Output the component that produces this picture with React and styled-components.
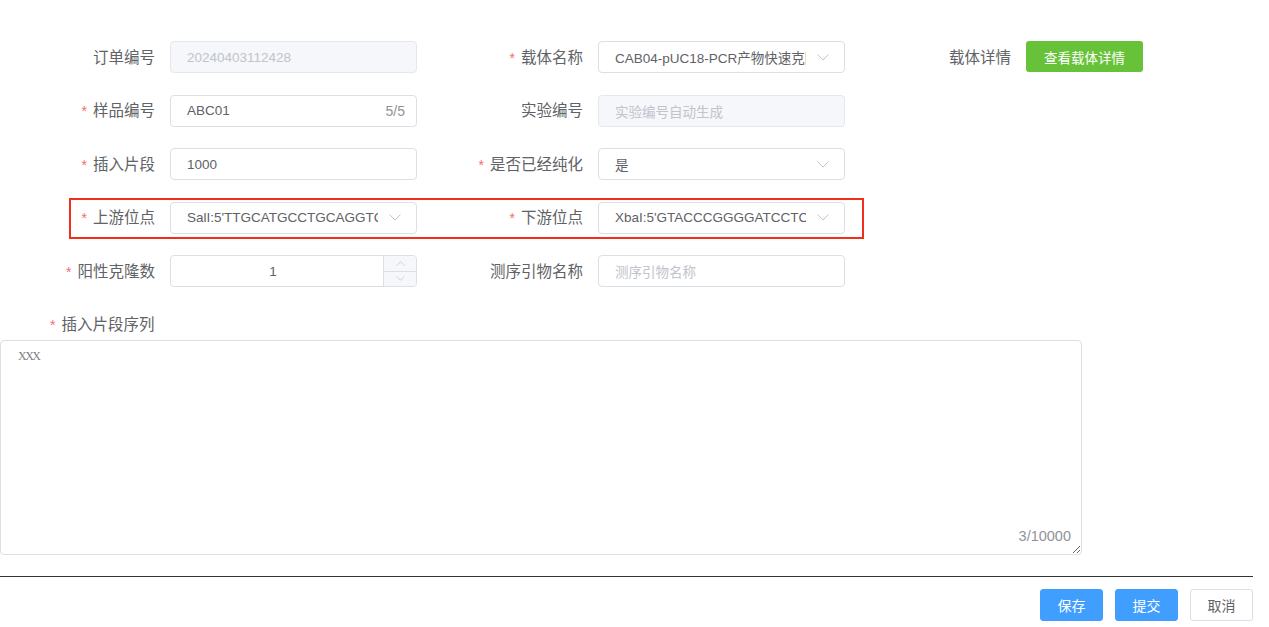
import React from 'react'
import styled, { createGlobalStyle } from 'styled-components'

const GlobalStyle = createGlobalStyle`
  body {
    margin: 0;
    background: #fff;
    font-family: "Liberation Sans", "Noto Sans CJK SC", sans-serif;
  }
`

function Chevron({ up }) {
  return (
    <svg width="12" height="7" viewBox="0 0 12 7" fill="none">
      <path
        d={up ? 'M0.5 6.5L6 1L11.5 6.5' : 'M0.5 0.5L6 6L11.5 0.5'}
        stroke="#c0c4cc"
        strokeWidth="1"
      />
    </svg>
  )
}

function Field({ label, required, children }) {
  return (
    <Cell>
      <Label>
        {required && <Star>*</Star>}
        {label}
      </Label>
      {children}
    </Cell>
  )
}

function Select({ value }) {
  return (
    <InputBox>
      <InputText>{value}</InputText>
      <Arrow>
        <Chevron />
      </Arrow>
    </InputBox>
  )
}

export default function App() {
  return (
    <Page>
      <GlobalStyle />
      <Form>
        <Row>
          <Field label="订单编号">
            <InputBox disabled>
              <InputText muted>20240403112428</InputText>
            </InputBox>
          </Field>
          <Field label="载体名称" required>
            <Select value="CAB04-pUC18-PCR产物快速克隆载体" />
          </Field>
          <Field label="载体详情">
            <GreenBtn>查看载体详情</GreenBtn>
          </Field>
        </Row>
        <Row>
          <Field label="样品编号" required>
            <InputBox>
              <InputText>ABC01</InputText>
              <Count>5/5</Count>
            </InputBox>
          </Field>
          <Field label="实验编号">
            <InputBox disabled>
              <InputText muted>实验编号自动生成</InputText>
            </InputBox>
          </Field>
        </Row>
        <Row>
          <Field label="插入片段" required>
            <InputBox>
              <InputText>1000</InputText>
            </InputBox>
          </Field>
          <Field label="是否已经纯化" required>
            <Select value="是" />
          </Field>
        </Row>
        <Row marked>
          <Field label="上游位点" required>
            <Select value="SalI:5'TTGCATGCCTGCAGGTCGACTCTAGAGGATCC" />
          </Field>
          <Field label="下游位点" required>
            <Select value="XbaI:5'GTACCCGGGGATCCTCTAGAGTCGACCTGCAGG" />
          </Field>
        </Row>
        <Row>
          <Field label="阳性克隆数" required>
            <InputBox>
              <NumberText>1</NumberText>
              <Stepper>
                <Step>
                  <Chevron up />
                </Step>
                <Step bottom>
                  <Chevron />
                </Step>
              </Stepper>
            </InputBox>
          </Field>
          <Field label="测序引物名称">
            <InputBox>
              <InputText muted>测序引物名称</InputText>
            </InputBox>
          </Field>
        </Row>
      </Form>

      <AreaLabel>
        <Star>*</Star>插入片段序列
      </AreaLabel>
      <AreaWrap>
        <TextArea defaultValue="XXX" />
        <AreaCount>3/10000</AreaCount>
      </AreaWrap>

      <Footer>
        <Btn primary>保存</Btn>
        <Btn primary>提交</Btn>
        <Btn>取消</Btn>
      </Footer>
    </Page>
  )
}

const Page = styled.div`
  padding-top: 41px;
  width: 1269px;
  overflow: hidden;
`
const Form = styled.div`
  display: flex;
  flex-direction: column;
  gap: 21.5px;
  padding-left: 50px;
`
const Row = styled.div`
  display: flex;
  position: relative;
  height: 32px;
  &::after {
    content: '';
    display: ${p => (p.marked ? 'block' : 'none')};
    position: absolute;
    left: 19px;
    top: -4px;
    width: 795px;
    height: 41px;
    border: 2px solid #f0301c;
    box-sizing: border-box;
    pointer-events: none;
  }
`
const Cell = styled.div`
  width: 428px;
  flex-shrink: 0;
  display: flex;
  align-items: center;
`
const Label = styled.div`
  width: 120px;
  flex-shrink: 0;
  padding-right: 15px;
  box-sizing: border-box;
  text-align: right;
  font-size: 15.5px;
  color: #606266;
  white-space: nowrap;
  margin-top: -3px;
`
const Star = styled.span`
  color: #f56c6c;
  font-size: 14px;
  margin-right: 6px;
`
const InputBox = styled.div`
  width: 247px;
  flex-shrink: 0;
  height: 32px;
  box-sizing: border-box;
  border: 1px solid ${p => (p.disabled ? '#e4e7ed' : '#dcdfe6')};
  background: ${p => (p.disabled ? '#f5f7fa' : '#fff')};
  border-radius: 4px;
  display: flex;
  align-items: center;
  position: relative;
  overflow: hidden;
`
const InputText = styled.div`
  flex: 1;
  min-width: 0;
  padding: 0 0 0 16px;
  font-size: 13.5px;
  color: ${p => (p.muted ? '#c0c4cc' : '#606266')};
  white-space: nowrap;
  overflow: hidden;
`
const Arrow = styled.div`
  width: 34px;
  flex-shrink: 0;
  display: flex;
  justify-content: center;
  padding-right: 4px;
`
const Count = styled.span`
  font-size: 14px;
  color: #909399;
  padding: 0 11px 0 8px;
`
const NumberText = styled.div`
  flex: 1;
  text-align: center;
  font-size: 13.5px;
  color: #606266;
  padding-right: 8px;
`
const Stepper = styled.div`
  width: 32px;
  height: 100%;
  display: flex;
  flex-direction: column;
  border-left: 1px solid #dcdfe6;
  background: #f5f7fa;
`
const Step = styled.div`
  flex: 1;
  display: flex;
  align-items: center;
  justify-content: center;
  border-top: ${p => (p.bottom ? '1px solid #dcdfe6' : 'none')};
  svg {
    width: 9px;
    height: 5px;
  }
`
const GreenBtn = styled.button`
  width: 117px;
  height: 31px;
  border: none;
  border-radius: 3px;
  background: #67c23a;
  color: #fff;
  font-family: inherit;
  font-size: 13.5px;
  padding: 0;
  margin-top: -1px;
`
const AreaLabel = styled.div`
  margin: 27px 0 4px 50px;
  height: 22px;
  line-height: 22px;
  font-size: 15.5px;
  color: #606266;
`
const AreaWrap = styled.div`
  position: relative;
  width: 1082px;
  height: 215px;
`
const TextArea = styled.textarea`
  width: 100%;
  height: 100%;
  box-sizing: border-box;
  border: 1px solid #dcdfe6;
  border-radius: 4px;
  padding: 8px 17px;
  font-family: "Liberation Serif", serif;
  font-size: 12px;
  letter-spacing: -1.5px;
  color: #7d7f84;
  resize: vertical;
  outline: none;
`
const AreaCount = styled.span`
  position: absolute;
  right: 11px;
  bottom: 11px;
  font-size: 14.5px;
  color: #909399;
  background: #fff;
`
const Footer = styled.div`
  width: 1253px;
  margin-top: 21px;
  border-top: 1px solid #333;
  padding-top: 12px;
  display: flex;
  justify-content: flex-end;
  gap: 12px;
`
const Btn = styled.button`
  width: 63px;
  height: 32px;
  box-sizing: border-box;
  border-radius: 3px;
  border: 1px solid ${p => (p.primary ? '#409eff' : '#dcdfe6')};
  background: ${p => (p.primary ? '#409eff' : '#fff')};
  color: ${p => (p.primary ? '#fff' : '#606266')};
  font-family: inherit;
  font-size: 14px;
  padding: 0;
`
